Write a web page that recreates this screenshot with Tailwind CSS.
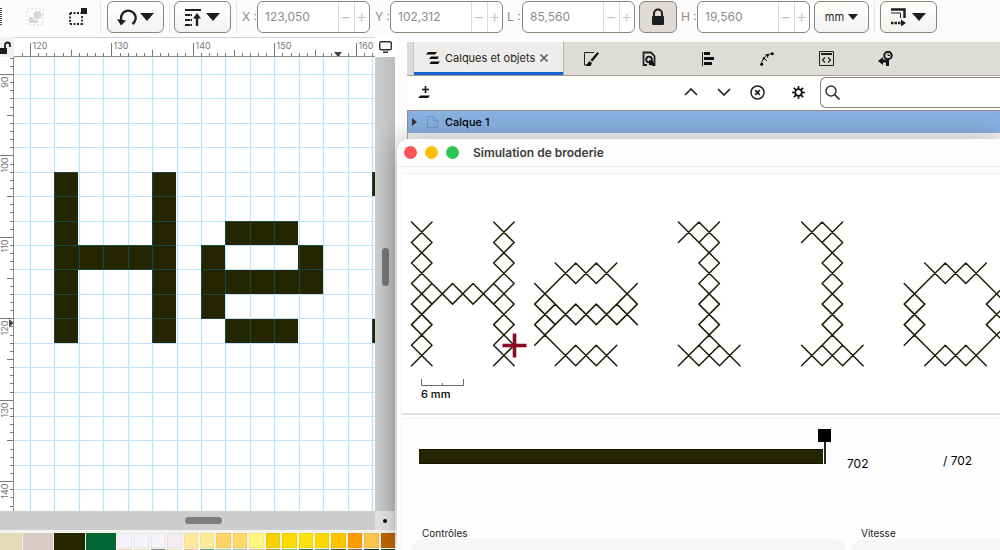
<!DOCTYPE html>
<html lang="fr">
<head>
  <meta charset="UTF-8" />
  <meta name="viewport" content="width=device-width, initial-scale=1.0"/>
  <title>Simulation de broderie</title>
  <script src="https://cdn.jsdelivr.net/npm/@tailwindcss/browser@4"></script>
</head>
<body class="relative flex flex-col h-screen overflow-hidden bg-[#fcfcfc] font-['Inter','Liberation_Sans',sans-serif] text-xs text-[#222]">

  <!-- Tool controls bar -->
  <header class="flex items-center shrink-0 h-[37px] pb-[3px] text-[#8c8c8c]">
    <svg class="shrink-0 w-[2px] h-5" viewBox="0 0 2 20"><path d="M1 1v18" stroke="#444" stroke-width="2" stroke-dasharray="1 1"/></svg>
    <button class="shrink-0 ml-6" aria-label="Grouper">
      <svg class="w-[18px] h-[18px]" viewBox="0 0 18 18" fill="#d6d6d6"><rect x="1" y="1" width="16" height="16" fill="none" stroke="#d6d6d6" stroke-dasharray="2 2"/><circle cx="11.500" cy="7" r="4"/><path d="M3 9h3l3 3h3v3H3z"/></svg>
    </button>
    <button class="shrink-0 ml-[25px]" aria-label="Sélection">
      <svg class="w-[18px] h-[18px]" viewBox="0 0 18 18"><path d="M1 5h11M1 16h12M1 5v11M13 8v9" fill="none" stroke="#222" stroke-width="1.800" stroke-dasharray="2 1.500"/><path d="M12 0h6v6h-6z" fill="#1c1f20"/></svg>
    </button>
    <div class="shrink-0 w-px h-[31px] ml-[13px] bg-[#e6e6e6]"></div>
    <button class="flex items-center justify-center shrink-0 gap-[3px] w-[57px] h-8 ml-[6px] rounded-md border border-[#8f8377] bg-linear-to-b from-white to-[#f3f2f0]" aria-label="Rotation">
      <svg class="w-5 h-[18px]" viewBox="0 0 20 18"><path d="M4.500 12.500A7.300 7.300 0 1 1 15.500 16" fill="none" stroke="#1c1f20" stroke-width="2.300"/><path d="M0 11l9 1.500-5 5z" fill="#1c1f20"/></svg>
      <svg class="w-3.5 h-2" viewBox="0 0 14 8"><path d="M0 0h14L7 8z" fill="#1c1f20"/></svg>
    </button>
    <div class="shrink-0 w-px h-[31px] ml-[5px] bg-[#e6e6e6]"></div>
    <button class="flex items-center justify-center shrink-0 gap-[5px] w-[57px] h-8 ml-1 rounded-md border border-[#8f8377] bg-linear-to-b from-white to-[#f3f2f0]" aria-label="Ordre">
      <svg class="w-4 h-[18px]" viewBox="0 0 16 18" fill="none" stroke="#1c1f20" stroke-width="2"><path d="M0 2h16"/><path d="M0 7h7M0 12h7M0 17h7" stroke-dasharray="5 .5"/><path d="M12 18V8" stroke-width="2.400"/><path d="M8 10.500L12 5l4 5.500z" fill="#1c1f20" stroke="none"/></svg>
      <svg class="w-3.5 h-2" viewBox="0 0 14 8"><path d="M0 0h14L7 8z" fill="#1c1f20"/></svg>
    </button>
    <div class="shrink-0 w-px h-[31px] ml-[5px] bg-[#e6e6e6]"></div>

    <label for="pos-x" class="shrink-0 w-5 pl-[5px] whitespace-nowrap">X :</label>
    <div class="flex items-stretch shrink-0 w-[113px] h-8 rounded-md border border-[#8f8377] bg-white overflow-hidden">
      <input id="pos-x" type="text" value="123,050" class="w-20 pl-[7px] outline-none">
      <button class="w-4 border-l border-[#dcdcdc] text-lg leading-none font-light text-[#c4c4c4]">−</button>
      <button class="w-4 border-l border-[#dcdcdc] text-lg leading-none font-light text-[#c4c4c4]">+</button>
    </div>
    <label for="pos-y" class="shrink-0 w-5 pl-[5px] whitespace-nowrap">Y :</label>
    <div class="flex items-stretch shrink-0 w-[113px] h-8 rounded-md border border-[#8f8377] bg-white overflow-hidden">
      <input id="pos-y" type="text" value="102,312" class="w-20 pl-[7px] outline-none">
      <button class="w-4 border-l border-[#dcdcdc] text-lg leading-none font-light text-[#c4c4c4]">−</button>
      <button class="w-4 border-l border-[#dcdcdc] text-lg leading-none font-light text-[#c4c4c4]">+</button>
    </div>
    <label for="size-l" class="shrink-0 w-[19px] pl-1 whitespace-nowrap">L :</label>
    <div class="flex items-stretch shrink-0 w-[113px] h-8 rounded-md border border-[#8f8377] bg-white overflow-hidden">
      <input id="size-l" type="text" value="85,560" class="w-20 pl-[7px] outline-none">
      <button class="w-4 border-l border-[#dcdcdc] text-lg leading-none font-light text-[#c4c4c4]">−</button>
      <button class="w-4 border-l border-[#dcdcdc] text-lg leading-none font-light text-[#c4c4c4]">+</button>
    </div>
    <button class="flex items-center justify-center shrink-0 w-[38px] h-8 ml-1 rounded-md border border-[#8f8377] bg-[#dedad6]" aria-label="Verrouiller les proportions">
      <svg class="w-3.5 h-[18px]" viewBox="0 0 14 18"><path d="M3 9V5.500a4 4 0 0 1 8 0V9" fill="none" stroke="#1c1f20" stroke-width="2"/><rect x="1" y="8" width="12" height="9" rx="1" fill="#1c1f20"/></svg>
    </button>
    <label for="size-h" class="shrink-0 w-5 pl-1 whitespace-nowrap">H :</label>
    <div class="flex items-stretch shrink-0 w-[113px] h-8 rounded-md border border-[#8f8377] bg-white overflow-hidden">
      <input id="size-h" type="text" value="19,560" class="w-20 pl-[7px] outline-none">
      <button class="w-4 border-l border-[#dcdcdc] text-lg leading-none font-light text-[#c4c4c4]">−</button>
      <button class="w-4 border-l border-[#dcdcdc] text-lg leading-none font-light text-[#c4c4c4]">+</button>
    </div>
    <button class="flex items-center justify-center shrink-0 gap-1 w-[55px] h-8 ml-1 rounded-md border border-[#8f8377] bg-linear-to-b from-white to-[#f3f2f0] text-[11px] text-[#222]">
      mm
      <svg class="w-2.5 h-1.5" viewBox="0 0 10 6"><path d="M0 0h10L5 6z" fill="#1c1f20"/></svg>
    </button>
    <div class="shrink-0 w-px h-[31px] ml-[5px] bg-[#e6e6e6]"></div>
    <button class="flex items-center justify-center shrink-0 gap-[6px] w-[57px] h-8 ml-[5px] rounded-md border border-[#8f8377] bg-linear-to-b from-white to-[#f3f2f0]" aria-label="Transformation">
      <svg class="w-[15px] h-[18px]" viewBox="0 0 15 18" fill="none" stroke="#1c1f20"><path d="M0 1.500h13.500V10" stroke-width="2.500"/><path d="M0 5h9.500v5"/><path d="M0 15h11" stroke-width="2.500" stroke-dasharray="2.500 1"/><path d="M10 11.500l5 3.500-5 3.500z" fill="#1c1f20" stroke="none"/></svg>
      <svg class="w-3.5 h-2" viewBox="0 0 14 8"><path d="M0 0h14L7 8z" fill="#1c1f20"/></svg>
    </button>
  </header>

  <main class="flex flex-1 min-h-0">

    <!-- Canvas with rulers, scrollbars and palette -->
    <section class="flex flex-col w-[39.5%] shrink-0">
      <div class="flex h-5 shrink-0 bg-white">
        <div class="w-3.5 shrink-0 pt-1 bg-[#f2f2f2]">
          <svg class="w-3 h-[14px]" viewBox="0 0 12 14"><path d="M5 8V4a2.500 2.500 0 0 1 5 0v2" fill="none" stroke="#1c1f20" stroke-width="1.800"/><rect width="7" height="6" y="7" fill="#1c1f20"/></svg>
        </div>
        <svg id="ruler-h" class="flex-1 min-w-0 h-5 border-t border-b border-t-[#d4d4d4] border-b-[#8a8a8a]"></svg>
        <button class="flex items-center justify-center w-5 shrink-0" aria-label="Affichage">
          <svg class="w-[13px] h-3" viewBox="0 0 13 12"><rect x=".7" y=".7" width="11.600" height="8" rx="1.500" fill="none" stroke="#2c2f30" stroke-width="1.400"/><path d="M4 11.200h5" stroke="#2c2f30" stroke-width="1.500"/></svg>
        </button>
      </div>
      <div class="flex flex-1 min-h-0">
        <svg id="ruler-v" class="w-3.5 shrink-0 h-full bg-white border-r border-[#8a8a8a]"></svg>
        <svg id="canvas" class="flex-1 min-w-0 h-full bg-white"></svg>
        <div class="flex justify-center w-5 shrink-0 bg-linear-to-r from-[#cfcfcf] to-[#bcbcbc]">
          <div class="w-[7px] h-[38px] mt-[191px] rounded-full bg-[#747678]"></div>
        </div>
      </div>
      <div class="flex h-[19px] shrink-0 bg-[#cdcdcd]">
        <div class="flex-1 pl-[185px] pt-[6px]"><div class="w-[37px] h-[7px] rounded-full bg-[#7d7d7d]"></div></div>
        <div class="flex items-center justify-center w-5 bg-[#e2e2e2]"><div class="w-1 h-1 rounded-full bg-black"></div></div>
      </div>
      <div class="flex gap-px h-[20px] shrink-0 pt-[3px] bg-[#f4f4ee] overflow-hidden">
        <button class="w-[22px] h-[18px] shrink-0 bg-[#e6d9b8]"></button>
        <button class="w-[30px] h-[18px] shrink-0 bg-[#dccac4]"></button>
        <button class="w-[31px] h-[18px] shrink-0 bg-[#232600]"></button>
        <button class="w-[30px] h-[18px] shrink-0 bg-[#006633]"></button>
        <div id="palette" class="grid grid-cols-17 gap-x-0.5 gap-y-px content-start flex-1 ml-px"></div>
      </div>
    </section>

    <!-- Layers panel -->
    <section class="flex flex-col flex-1 min-w-0 ml-3 mt-[5px]">
      <nav class="flex h-[34px] shrink-0 bg-[#dedcd8] border-b border-[#a89f94]">
        <div class="w-[7px] border-r border-[#c9c5bf]"></div>
        <div class="flex items-center gap-[5px] w-[149px] pt-0.5 pl-3 bg-[#efedeb] border-b-3 border-[#1464d4]">
          <svg class="w-3.5 h-3 shrink-0" viewBox="0 0 14 12" fill="#111"><path d="M2 0h9l-2 2.500H0zM5 4.500h8L11.500 7H3zM5 9.500h9L12 12H3.500z"/></svg>
          <a href="#" class="whitespace-nowrap text-[11px]">Calques et objets</a>
          <button aria-label="Fermer"><svg class="w-2 h-2" viewBox="0 0 8 8"><path d="M.5.5l7 7m0-7l-7 7" stroke="#666" stroke-width="1.600"/></svg></button>
        </div>
        <button class="flex items-center justify-center w-[54px] border-l border-[#b5b1ab]" aria-label="Fond et contour">
          <svg class="w-4 h-4" viewBox="0 0 16 16"><path d="M11 1.500H1.500V14H4" fill="none" stroke="#222"/><path d="M14.500 1L16 2.500 9.500 10.500l-2-1.500zM6.500 10L9 12l-1.500 3H2.500z" fill="#111"/></svg>
        </button>
        <button class="flex items-center justify-center w-[64px]" aria-label="Objet">
          <svg class="w-3.5 h-4" viewBox="0 0 14 16"><path d="M5 14H1.500V1.500h7.500l3.500 3.500V14H11" fill="none" stroke="#222" stroke-width="1.800"/><circle cx="7" cy="8.500" r="2.800" fill="none" stroke="#111" stroke-width="1.800"/><path d="M7 9l4 1 2 5-6-1z" fill="#111"/></svg>
        </button>
        <button class="flex items-center justify-center w-[53px]" aria-label="Aligner">
          <svg class="w-3 h-3.5" viewBox="0 0 12 14"><path d="M.5 0v14" stroke="#222"/><path d="M2 1.500h6M2 6.500h10M2 11.500h8" stroke="#111" stroke-width="3"/></svg>
        </button>
        <button class="flex items-center justify-center w-[65px]" aria-label="Chemin">
          <svg class="w-3.5 h-3.5" viewBox="0 0 14 14"><path d="M1.500 12.500C2 6 6 2 12.500 1.500M3 5l4 4M6 2l2 4" fill="none" stroke="#222"/><circle cx="1.700" cy="12.300" r="1.500"/><circle cx="12.300" cy="1.700" r="1.500"/><circle cx="4" cy="6.500" r="1.200"/><circle cx="7.500" cy="3.300" r="1.200"/></svg>
        </button>
        <button class="flex items-center justify-center w-[54px]" aria-label="Éditeur XML">
          <svg class="w-[15px] h-[15px]" viewBox="0 0 15 15" fill="none" stroke="#222"><path d="M.5.5h14v14H.5z"/><path d="M2 3h11" stroke-width="2"/><path d="M6 6.500L3.500 9 6 11.500M9 6.500L11.500 9 9 11.500" stroke-width="1.200"/></svg>
        </button>
        <button class="flex items-center justify-center w-[64px]" aria-label="Historique">
          <svg class="w-[15px] h-[15px]" viewBox="0 0 15 15"><circle cx="10" cy="4.500" r="3.700" fill="#ddd" stroke="#111" stroke-width="2"/><path d="M10 2.500v2h2" fill="none" stroke="#111"/><path d="M0 10l5-4v2.500h6V15H8v-3.500H5V14z" fill="#111"/></svg>
        </button>
      </nav>
      <div class="flex items-center h-[34px] shrink-0 pb-0.5 pl-[11px] bg-white">
        <button aria-label="Ajouter un calque"><svg class="w-3 h-3" viewBox="0 0 12 12"><path d="M7.500 0v7M4 3.500h7" stroke="#111" stroke-width="1.600"/><path d="M2.500 9.500H12L10 12H0z" fill="#111"/></svg></button>
        <button class="ml-[254px]" aria-label="Monter"><svg class="w-3.5 h-2" viewBox="0 0 14 8"><path d="M1 7l6-6 6 6" fill="none" stroke="#222" stroke-width="1.700"/></svg></button>
        <button class="ml-[19px]" aria-label="Descendre"><svg class="w-3.5 h-2" viewBox="0 0 14 8"><path d="M1 1l6 6 6-6" fill="none" stroke="#222" stroke-width="1.700"/></svg></button>
        <button class="ml-[19px]" aria-label="Supprimer"><svg class="w-[15px] h-[15px]" viewBox="0 0 15 15" fill="none" stroke="#222" stroke-width="1.500"><circle cx="7.500" cy="7.500" r="6.500"/><path d="M5.200 5.200l4.600 4.600m0-4.600l-4.600 4.600" stroke-width="1.800"/></svg></button>
        <div class="w-px h-[30px] ml-[13px] bg-[#e4e4e4]"></div>
        <button class="ml-3.5" aria-label="Paramètres"><svg class="w-[13px] h-[13px]" viewBox="0 0 14 14" fill="none" stroke="#111"><circle cx="7" cy="7" r="3.600" stroke-width="2"/><path d="M7 0v3M7 11v3M0 7h3M11 7h3M2 2l2.200 2.200M9.800 9.800L12 12M12 2L9.800 4.200M4.200 9.800L2 12" stroke-width="1.800"/></svg></button>
        <label class="flex items-center flex-1 h-[31px] ml-[15px] pl-1 rounded-l-md border border-r-0 border-[#8f8377]">
          <svg class="w-[15px] h-[15px]" viewBox="0 0 15 15" fill="none" stroke="#333"><circle cx="6" cy="6" r="5" stroke-width="1.500"/><path d="M9.500 9.500l5 5" stroke-width="1.700"/></svg>
          <input type="text" aria-label="Rechercher" class="flex-1 min-w-0 outline-none">
        </label>
      </div>
      <div class="flex items-center h-[23px] shrink-0 pl-1 border-t border-l border-[#9a8f85] bg-[#88b0e0]">
        <svg class="w-[5px] h-2" viewBox="0 0 5 8"><path d="M0 0l5 4-5 4z" fill="#333"/></svg>
        <svg class="w-[11px] h-3 ml-2.5" viewBox="0 0 11 12"><path d="M.5.5h6l4 4v7H.5zM6.500.5v4h4" fill="none" stroke="#6c96cc"/></svg>
        <span class="ml-[7px] text-[11px] font-medium text-black">Calque 1</span>
      </div>
      <div class="flex-1 border-l border-[#b3aaa0] bg-[#f7f7f7]"></div>
    </section>
  </main>

  <!-- Simulator window, floating over the editor -->
  <section class="absolute left-[39.7%] right-0 top-[139px] bottom-0 flex flex-col rounded-tl-xl bg-[#fdfdfd] shadow-[0_0_24px_rgba(0,0,0,0.3)]">
    <div class="flex items-center gap-2 h-7 shrink-0 pl-[7px] border-b border-[#ececec]">
      <button class="w-[13px] h-[13px] rounded-full bg-[#fe5257]" aria-label="Fermer"></button>
      <button class="w-[13px] h-[13px] rounded-full bg-[#fdc00a]" aria-label="Réduire"></button>
      <button class="w-[13px] h-[13px] rounded-full bg-[#2fc554]" aria-label="Agrandir"></button>
      <h1 class="ml-[6px] font-semibold text-[#3c3c3c]">Simulation de broderie</h1>
    </div>
    <div class="flex flex-col h-[242px] shrink-0 mt-[6px] ml-1 border-t border-l border-[#f2f2f2] border-b-2 border-b-[#dfdfdf] bg-white">
      <svg id="stitches" class="w-full h-[205px] shrink-0"></svg>
      <div class="flex flex-col items-start pl-[19px]">
        <svg class="w-[43px] h-[7px]" viewBox="0 0 43 7"><path d="M.5 0v6.500h42V0M21.500 4v3" fill="none" stroke="#666"/></svg>
        <span class="text-[11px] leading-4 font-medium text-black">6 mm</span>
      </div>
    </div>
    <div class="flex flex-col flex-1 ml-1 mt-[3px] border-t border-l border-[#f2f2f2]">
      <div class="flex h-[108px] shrink-0 pl-[17px] pt-[10px]">
        <!-- Stitch slider: track with the handle standing on its end -->
        <div class="flex w-[412px] h-[35px] items-end">
          <div class="w-[404px] h-[15px] border-y border-[#111200] bg-[#232600]"></div>
          <div class="flex flex-col items-center w-[13px] -ml-[5px]">
            <div class="w-[13px] h-[13px] bg-black"></div>
            <div class="w-0.5 h-[22px] bg-[#26262b]"></div>
          </div>
        </div>
        <input type="text" value="702" aria-label="Point courant" class="w-[93px] h-6 mt-[22px] ml-[10px] pl-1.5 rounded-md text-xs text-black outline-none">
        <span class="mt-6 ml-[9px] text-xs leading-4 text-black">/ 702</span>
      </div>
      <div class="flex gap-1.5 flex-1 pl-2.5">
        <div class="flex flex-col w-[434px] shrink-0">
          <h2 class="pl-2.5 text-[10px] leading-3">Contrôles</h2>
          <div class="flex-1 rounded-t-xl bg-[#f6f6f6]"></div>
        </div>
        <div class="flex flex-col flex-1">
          <h2 class="pl-[9px] text-[10px] leading-3">Vitesse</h2>
          <div class="flex-1 rounded-tl-xl bg-[#f6f6f6]"></div>
        </div>
      </div>
    </div>
  </section>

  <script>
    // column and row of the first cell, then the rows of the letter
    const letters = [
      [0, 0, ["#...#", "#...#", "#...#", "#####", "#...#", "#...#", "#...#"]],
      [6, 2, [".###.", "#...#", "#####", "#....", ".###."]],
      [13, 0, ["##.", ".#.", ".#.", ".#.", ".#.", ".#.", "###"]],
      [19, 0, ["##.", ".#.", ".#.", ".#.", ".#.", ".#.", "###"]],
      [24, 2, [".###.", "#...#", "#...#", "#...#", ".###."]],
    ];
    const cells = letters.flatMap(([col, row, rows]) =>
      rows.flatMap((line, y) => [...line].flatMap((c, x) => c === "#" ? [[col + x, row + y]] : [])));

    const mm = 171 / 21; // pixels per millimetre at this zoom
    const step = 3 * mm;
    const rulerH = document.getElementById("ruler-h");
    const rulerV = document.getElementById("ruler-v");

    // Canvas: filled cells below, grid above
    let fills = "", grid = "";
    for (const [x, y] of cells) {
      const left = Math.round(40 + x * step), top = Math.round(115 + y * step);
      const right = Math.round(40 + (x + 1) * step), bottom = Math.round(115 + (y + 1) * step);
      fills += `M${left} ${top}H${right}V${bottom}H${left}z`;
    }
    for (let i = 0; i < 60; i++) {
      grid += `M${Math.round(16 + i * step) + 0.5} 0V2000M0 ${Math.round(17 + i * step) + 0.5}H2000`;
    }
    document.getElementById("canvas").innerHTML =
      `<path d="${fills}" fill="#232600"/><path d="${grid}" stroke="#0a9bee" stroke-opacity=".28" stroke-width="1.200"/>`;

    // Rulers: one tick per millimetre, a label every ten
    function drawRulers() {
      const width = rulerH.getBoundingClientRect().width;
      const height = rulerV.getBoundingClientRect().height;
      let ticks = "", labels = "";
      for (let i = -1; 16 + i * mm < width; i++) {
        const p = Math.round(16 + i * mm) + 0.5;
        ticks += `M${p} 19V${i % 10 === 0 ? 5 : i % 5 === 0 ? 12 : 15}`;
        if (i % 10 === 0) labels += `<text x="${p + 2}" y="11">${120 + i}</text>`;
      }
      rulerH.innerHTML =
        `<path d="${ticks}" stroke="#777"/><path d="M320 14h8l-4 5z" fill="#444"/><g font-size="9" fill="#777">${labels}</g>`;

      ticks = "";
      labels = "";
      for (let i = -2; 17 + i * mm < height; i++) {
        const p = Math.round(17 + i * mm) + 0.5;
        ticks += `M14 ${p}H${i % 10 === 0 ? 0 : i % 5 === 0 ? 7 : 10}`;
        if (i % 10 === 0) labels += `<text transform="translate(8 ${p + 2}) rotate(-90)" text-anchor="end">${90 + i}</text>`;
      }
      rulerV.innerHTML =
        `<path d="${ticks}" stroke="#777"/><path d="M9 262v8l5-4z" fill="#444"/><g font-size="9" fill="#777">${labels}</g>`;
    }
    const observer = new ResizeObserver(drawRulers);
    observer.observe(rulerH);
    observer.observe(rulerV);

    // Simulation: one cross per cell, then the needle position
    const size = 20.53;
    const crosses = cells.map(([x, y]) => {
      const left = 9.500 + x * size, top = 48 + y * size;
      return `M${left} ${top}l${size} ${size}m0 ${-size}l${-size} ${size}`;
    }).join("");
    document.getElementById("stitches").innerHTML =
      `<path d="${crosses}" stroke="#1c1e08" stroke-width="1.500" stroke-linecap="round"/>
       <path d="M100.500 171.500H124.500M112.500 159.500V183.500" stroke="#8c0a26" stroke-width="3.600"/>`;

    // Palette: a full row, then the top of the next one
    const swatches = ["#f4f4fa", "#f4f4fa", "#f4f4f9", "#f4eef2", "#ffe9a0", "#ffec96", "#fed466", "#ffda66", "#fff780",
      "#f5d200", "#ffda00", "#ffe00f", "#fdd800", "#ffc400", "#ff9d00", "#fbc44c", "#bd6500"];
    const nextSwatches = ["#f3d9b8", "#efe9cc", "#8f8f86", "#f6f0b8", "#f6c98a", "#76ae62", "#b5ceaa", "#a8c89c", "#dcd69a",
      "#a5a03c", "#7fd04c", "#3c7440", "#5a9a7c", "#4c4c14", "#7c6c3c", "#1c2c24", "#0c4c2c"];
    document.getElementById("palette").innerHTML = [...swatches, ...nextSwatches]
      .map(color => `<button class="h-[15px] border border-black/5" style="background:${color}"></button>`).join("");
  </script>
</body>
</html>
